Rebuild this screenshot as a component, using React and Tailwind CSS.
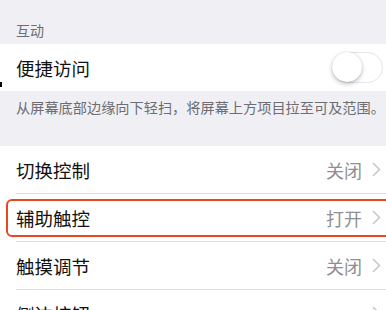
import React from "react";

const font = { fontFamily: '"Noto Sans CJK SC", "Noto Sans", sans-serif' };

function Chevron() {
  return (
    <svg width="9" height="15" viewBox="0 0 9 15" className="ml-[10px]">
      <path d="M1.5 1.5 L7.5 7.5 L1.5 13.5" fill="none" stroke="#c7c7cc" strokeWidth="1.6" strokeLinecap="round" strokeLinejoin="round" />
    </svg>
  );
}

function Row({ label, value, highlight, last }) {
  return (
    <div className="relative">
      <div className="h-[47px] flex items-center justify-between pl-4 pr-[5px]">
        <span className="text-[18.5px] leading-[24px] text-[#111]">{label}</span>
        <div className="flex items-center">
          {value && <span className="text-[18px] leading-[24px] text-[#8e8e93]">{value}</span>}
          <Chevron />
        </div>
      </div>
      {!last && <div className="ml-4 h-px bg-[#dcdce0]" />}
      {highlight && (
        <div className="absolute left-[6px] -right-[6px] top-[5px] h-[38px] rounded-[6px] border-2 border-[#e8471f]" />
      )}
    </div>
  );
}

export default function App() {
  return (
    <div className="relative w-[386px] h-[310px] overflow-hidden bg-[#efeff4]" style={font}>
      <div className="h-[44px] flex items-end px-4 pb-[4px]">
        <span className="text-[14px] leading-[20px] text-[#6d6d72]">互动</span>
      </div>

      <div className="h-[47px] bg-white flex items-center justify-between pl-4 pr-[3px]">
        <span className="text-[18.5px] leading-[24px] text-[#111]">便捷访问</span>
        <div className="relative w-[51px] h-[31px] rounded-full border-[1.5px] border-[#e5e5ea] bg-white">
          <div className="absolute -left-[1px] -top-[1px] w-[30px] h-[30px] rounded-full bg-white shadow-[0_2px_4px_rgba(0,0,0,0.25),0_0_1px_rgba(0,0,0,0.2)]" />
        </div>
      </div>
      <div className="absolute left-0 top-[82px] w-[2px] h-[5px] bg-black" />

      <div className="h-[55px] px-4 pt-[6px]">
        <p className="text-[14.2px] leading-[20px] text-[#6d6d72] whitespace-nowrap">
          从屏幕底部边缘向下轻扫，将屏幕上方项目拉至可及范围。
        </p>
      </div>

      <div className="bg-white">
        <Row label="切换控制" value="关闭" />
        <Row label="辅助触控" value="打开" highlight />
        <Row label="触摸调节" value="关闭" />
        <Row label="侧边按钮" last />
      </div>
    </div>
  );
}
